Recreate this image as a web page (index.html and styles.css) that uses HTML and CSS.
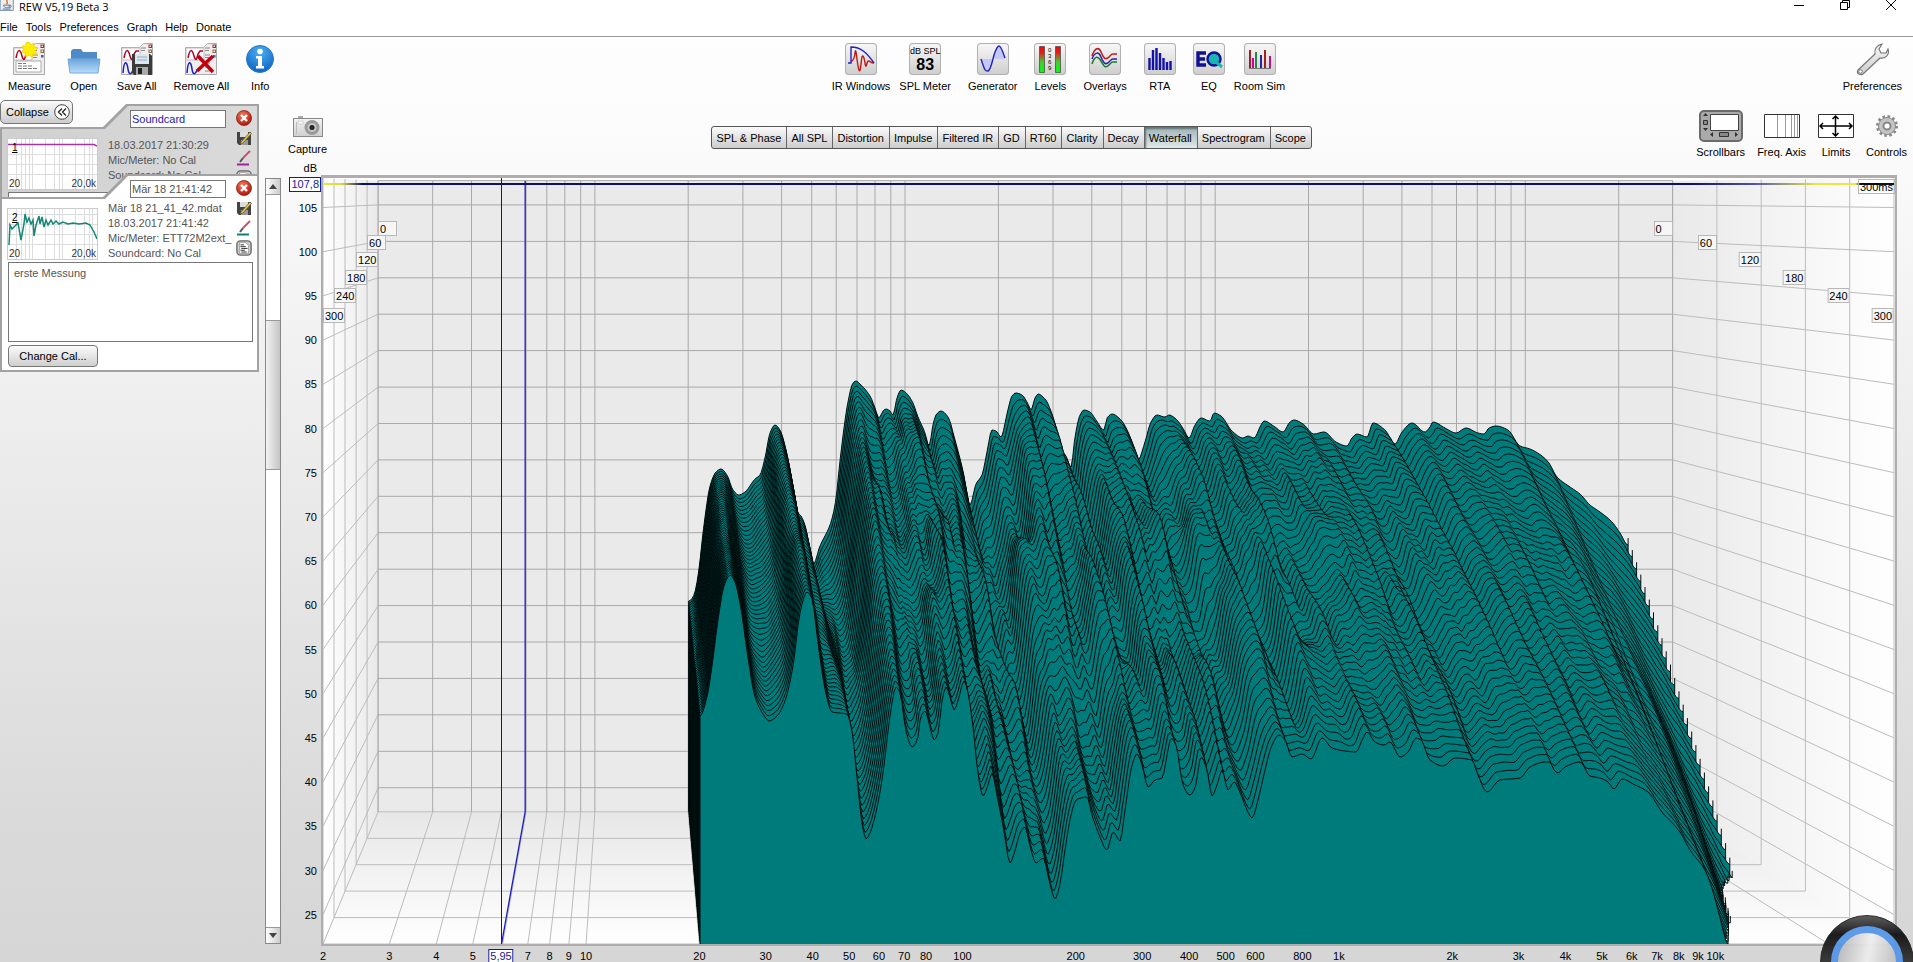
FILE: index.html
```html
<!DOCTYPE html>
<html lang="de">
<head>
    <meta charset="UTF-8">
    <meta name="viewport" content="width=device-width, initial-scale=1.0">
    <title>REW V5,19 Beta 3</title>
    <link rel="stylesheet" href="styles.css">
</head>
<body>
    <svg class="defs" aria-hidden="true">
        <defs>
            <linearGradient id="chrome" x1="0" y1="0" x2="0" y2="1"><stop offset="0" stop-color="#f4f4f4"/><stop offset="1" stop-color="#cfcfcf"/></linearGradient>
            <linearGradient id="meter" x1="0" y1="0" x2="0" y2="1"><stop offset="0" stop-color="#f00"/><stop offset=".25" stop-color="#d22"/><stop offset=".6" stop-color="#4c3"/><stop offset="1" stop-color="#0f0"/></linearGradient>
            <linearGradient id="folder" x1="0" y1="0" x2="0" y2="1"><stop offset="0" stop-color="#6aa5dd"/><stop offset="1" stop-color="#b9dcf8"/></linearGradient>
            <radialGradient id="ball" cx=".5" cy=".25" r=".8"><stop offset="0" stop-color="#4cb0f5"/><stop offset="1" stop-color="#0a60bd"/></radialGradient>
            <radialGradient id="redball" cx=".4" cy=".3" r=".8"><stop offset="0" stop-color="#f47a5c"/><stop offset="1" stop-color="#a80a00"/></radialGradient>
            <symbol id="i-sheet" viewBox="0 0 32 32">
                <path d="M.5 4.500h18l4-4h9v31H.5z" fill="#eee" stroke="#aaa"/>
                <path d="M1 5h18v12H1z" fill="#fff" stroke="#bbb"/>
                <path d="M3 15c2-10 4-9 6-2s3 2 4-2l2-3h3" fill="none" stroke="#b00020" stroke-width="1.500"/>
                <path d="M20 5h5M20 7.500h4M20 12h5M20 14.500h4" stroke="#888"/>
                <rect x="28" y="2" width="2.500" height="2.500" fill="none" stroke="#b22"/><rect x="28" y="7" width="2.500" height="2.500" fill="none" stroke="#964"/><rect x="28" y="12" width="2.500" height="2.500" fill="#36a"/>
            </symbol>
            <symbol id="i-disk" viewBox="0 0 20 22">
                <path d="M0 1h18l2 2v19H2l-2-2z" fill="#3a3a3a"/><path d="M3 1h14v10H3z" fill="#dce8ee"/><path d="M5 4h10M5 7h10" stroke="#9ab"/><path d="M4 14h12v8H4z" fill="#aaa"/><path d="M6 15h4v6H6z" fill="#222"/>
            </symbol>
            <symbol id="i-close" viewBox="0 0 16 16"><circle cx="8" cy="8" r="7.500" fill="url(#redball)" stroke="#8c1a10" stroke-width=".8"/><path d="M5 5l6 6M11 5l-6 6" stroke="#fff" stroke-width="2.400"/></symbol>
            <symbol id="i-savepen" viewBox="0 0 16 16"><path d="M1 2h14v13H3l-2-2z" fill="#444"/><path d="M4 2h8v5H4z" fill="#ddd"/><path d="M5 10h7v5H5z" fill="#999"/><path d="M5 12L14 2l1.500 1.500L7 13l-3 1z" fill="#e8c548" stroke="#553" stroke-width=".7"/></symbol>
            <symbol id="i-brush" viewBox="0 0 16 16"><path d="M14 1L7 8" stroke="#d0506a" stroke-width="2"/><path d="M7 8l-3 4" stroke="#555" stroke-width="2"/><path d="M1 14.500h12" stroke="currentColor" stroke-width="2"/></symbol>
            <symbol id="i-note" viewBox="0 0 18 18"><rect x="1" y="1" width="16" height="16" rx="4" fill="#ccc" stroke="#666" stroke-width="1.500"/><path d="M4 3h7l3 3v9H4z" fill="#fff" stroke="#777" stroke-width=".6"/><path d="M5 5.500h4M5 7.500h6M6 9.500h7M5 11.500h5M6 13.500h6" stroke="#222"/></symbol>
        </defs>
    </svg>

    <header class="titlebar">
        <svg class="java" viewBox="0 0 16 16"><rect x="-1" y="-2" width="15" height="15" fill="#eee" stroke="#68a"/><path d="M8 0c-4 3 2 3-2 6" fill="none" stroke="#e07020" stroke-width="1.500"/><path d="M3 7h7c0 4-7 4-7 0M10 7c3 0 2 3-1 3M2 11.500h9" fill="none" stroke="#446a90"/></svg>
        <span class="title">REW V5,19 Beta 3</span>
        <div class="winbtns">
            <button aria-label="Minimize"><svg viewBox="0 0 12 12"><path d="M1 5.500h10" stroke="#000"/></svg></button>
            <button aria-label="Restore"><svg viewBox="0 0 12 12"><path d="M1.500 2.500h7v7h-7zM3.500 2.500v-2h7v7h-2" fill="none" stroke="#000"/></svg></button>
            <button aria-label="Close"><svg viewBox="0 0 12 12"><path d="M1 0l10 10M11 0L1 10" stroke="#000"/></svg></button>
        </div>
    </header>

    <nav class="menubar">
        <a href="#">File</a><a href="#">Tools</a><a href="#">Preferences</a><a href="#">Graph</a><a href="#">Help</a><a href="#">Donate</a>
    </nav>

    <div class="toolbar">
        <div class="tools files">
            <button class="tool"><svg viewBox="0 0 32 32"><use href="#i-sheet" width="32" height="32"/><path d="M3 18h25v11H3z" fill="#fff" stroke="#aaa"/><path d="M5 20.500h8M5 23h14M5 25.500h20" stroke="#777" stroke-dasharray="4 1"/><path d="M16-1l2 3 3-2 0 4 4 1-3 3 2 3-4 0-1 3-3-2-3 2-1-4-3-1 2-3-2-3 4-0 0-3z" fill="#ffee00" stroke="#f4d800"/></svg>Measure</button>
            <button class="tool"><svg viewBox="0 0 32 32"><path d="M3 8l2-2h8l2 3h14v8H3z" fill="#4f8bc8"/><path d="M0 16h32l-2 14H2z" fill="url(#folder)" stroke="#72aade"/></svg>Open</button>
            <button class="tool"><svg viewBox="0 0 32 32"><use href="#i-sheet" width="32" height="32"/><path d="M2 30c1-14 4-12 5-4s4 4 5 1" fill="none" stroke="#1a1acc" stroke-width="1.500"/><use href="#i-disk" x="11" y="10" width="20" height="22"/></svg>Save All</button>
            <button class="tool"><svg viewBox="0 0 32 32"><use href="#i-sheet" width="32" height="32"/><path d="M2 30c1-14 4-12 5-4s4 4 5 1" fill="none" stroke="#1a1acc" stroke-width="1.500"/><path d="M20 20h5M20 24h4M20 28h5" stroke="#888"/><path d="M13 13l15 16M28 13L12 28" stroke="#c00010" stroke-width="3.500"/></svg>Remove All</button>
            <button class="tool info"><svg viewBox="0 0 28 28"><circle cx="14" cy="14" r="13.500" fill="url(#ball)" stroke="#2a78c8"/><circle cx="14" cy="6.500" r="2.800" fill="#fff"/><path d="M10 11h6v10h2v2.500h-8V21h2v-7.500h-2z" fill="#fff"/></svg>Info</button>
        </div>
        <div class="tools views">
            <button class="tool"><svg class="tile" viewBox="0 0 32 32"><path d="M3 20h3V4c10 0 16 6 23 16" fill="none" stroke="#22b" stroke-width="1.400"/><path d="M6 19c1-2 3 0 4-9s2 12 4 17 2-16 4-14 2 11 3 10 1-6 3-5 2 2 5 2" fill="none" stroke="#c01818" stroke-width="1.400"/></svg>IR Windows</button>
            <button class="tool"><span class="tile spl"><small>dB SPL</small><b>83</b></span>SPL Meter</button>
            <button class="tool"><svg class="tile" viewBox="0 0 32 32"><path d="M4 16c3 9 4 13 7 12s4-8 5-12zM16 16c2-6 3-12 6-13s4 6 6 13z" fill="#c3c8f4"/><path d="M4 16c3 9 4 13 7 12s5-13 6-16 3-9 5-9 4 6 6 12" fill="none" stroke="#22b" stroke-width="1.400"/></svg>Generator</button>
            <button class="tool"><svg class="tile" viewBox="0 0 32 32"><path d="M5.500 3.500h5v26h-5zM21.500 3.500h5v26h-5z" fill="url(#meter)" stroke="#444" stroke-width=".7"/><text x="14" y="9" class="tick">0</text><text x="14" y="15" class="tick">3</text><text x="14" y="21" class="tick">6</text><text x="14" y="27" class="tick">9</text></svg>Levels</button>
            <button class="tool"><svg class="tile" viewBox="0 0 32 32"><g fill="none" stroke-width="1.500"><path d="M3 13c3-9 7-9 9-4s4 9 8 5 3-3 8-3" stroke="#c01818"/><path d="M3 16c3-8 7-7 9-2s4 9 8 5 3-3 8-3" stroke="#22b"/><path d="M3 21c3-9 6-8 9-3s4 8 8 4 3-3 8-3" stroke="#197a2c"/></g></svg>Overlays</button>
            <button class="tool"><svg class="tile" viewBox="0 0 32 32"><path d="M7 27V15M10.500 27V7M14 27V5M17.500 27V10M21 27V15M24.500 27V19M28 27V18" transform="translate(-1.500 0)" stroke="#1212a8" stroke-width="2.400"/></svg>RTA</button>
            <button class="tool"><svg class="tile" viewBox="0 0 32 32"><circle cx="21" cy="16" r="6.500" fill="#19b4b4" stroke="#101090" stroke-width="2.400"/><path d="M23 19l6 5" stroke="#19b4b4" stroke-width="3"/><path d="M13 10H5v12h8M5 16h7" fill="none" stroke="#101090" stroke-width="3.400"/></svg>EQ</button>
            <button class="tool"><svg class="tile" viewBox="0 0 32 32"><g stroke-width="2"><path d="M6 25V7" stroke="#a02020"/><path d="M9 25V15" stroke="#c0a"/><path d="M12 25V9" stroke="#284"/><path d="M17 25V12" stroke="#22a"/><path d="M21 25V7" stroke="#a02020"/><path d="M26 25V13" stroke="#b18"/></g><path d="M5 25.500h22" stroke="#777"/></svg>Room Sim</button>
        </div>
        <div class="tools prefs">
            <button class="tool"><svg viewBox="0 0 32 32"><path d="M2 27L19 11c-1-5 2-9 7-10l-3 5 2 4 5 0 2-4c2 6-3 10-8 9L7 31c-3 2-7-1-5-4z" fill="url(#chrome)" stroke="#777" stroke-width="1.200"/><circle cx="4.500" cy="28.500" r="1.800" fill="#fff" stroke="#777"/></svg>Preferences</button>
        </div>
    </div>

    <div class="main">
        <aside class="sidebar">
            <button class="collapse">Collapse <svg viewBox="0 0 16 16"><circle cx="8" cy="8" r="7.300" fill="#fff" stroke="#444"/><path d="M8 4.500L4.500 8 8 11.500M12 4.500L8.500 8l3.500 3.500" fill="none" stroke="#222" stroke-width="1.300"/></svg></button>
            <div class="sidebody">
                <div class="cards">
                    <section class="card muted">
                        <div class="cardbody">
                            <input class="cardname" aria-label="Name 1" value="Soundcard">
                            <svg class="thumb" viewBox="0 0 89 50">
                                <path class="tgrid" d="M8.500 0v50M13.500 0v50M17.500 0v50M21.500 0v50M24.500 0v50M37.500 0v50M46.500 0v50M51.500 0v50M54.500 0v50M67.500 0v50M76.500 0v50M81.500 0v50M84.500 0v50M0 15.500h89M0 25.500h89M0 35.500h89"/>
                                <path d="M0 5.500h86l3 1.500" fill="none" stroke="#a436a4" stroke-width="1.500"/>
                                <text x="4" y="12" class="num">1</text><text x="1" y="48">20</text><text x="88" y="48" text-anchor="end">20,0k</text>
                            </svg>
                            <p class="meta">18.03.2017 21:30:29<br>Mic/Meter: No Cal<br>Soundcard: No Cal</p>
                            <div class="cardicons brush-violet"><svg><use href="#i-close"/></svg><svg><use href="#i-savepen"/></svg><svg><use href="#i-brush"/></svg><svg><use href="#i-note"/></svg></div>
                            <textarea class="notes" aria-label="Notes 1"></textarea>
                            <button class="change">Change Cal...</button>
                        </div>
                    </section>
                    <section class="card">
                        <div class="cardbody">
                            <input class="cardname" aria-label="Name 2" value="Mär 18 21:41:42">
                            <svg class="thumb" viewBox="0 0 89 50">
                                <path class="tgrid" d="M8.500 0v50M13.500 0v50M17.500 0v50M21.500 0v50M24.500 0v50M37.500 0v50M46.500 0v50M51.500 0v50M54.500 0v50M67.500 0v50M76.500 0v50M81.500 0v50M84.500 0v50M0 5.500h89M0 15.500h89M0 25.500h89M0 35.500h89"/>
                                <path d="M1 36l1-20 2 4 3-3 3-3 3 17 3-16 1-10 2 8 2-4 2 6 2-4 1 16 2-11 3-9 1 8 2-7 2 10 2-7 2 5 3-5 2 4 3-3 3 3 4-2 5 2 5-1 6 1 7-1 4 2 4 7 3 7" fill="none" stroke="#138878" stroke-width="1.500"/>
                                <text x="4" y="12" class="num">2</text><text x="1" y="48">20</text><text x="88" y="48" text-anchor="end">20,0k</text>
                            </svg>
                            <p class="meta">Mär 18 21_41_42.mdat<br>18.03.2017 21:41:42<br>Mic/Meter: ETT72M2ext_<br>Soundcard: No Cal</p>
                            <div class="cardicons brush-teal"><svg><use href="#i-close"/></svg><svg><use href="#i-savepen"/></svg><svg><use href="#i-brush"/></svg><svg><use href="#i-note"/></svg></div>
                            <textarea class="notes" aria-label="Notes 2">erste Messung</textarea>
                            <button class="change">Change Cal...</button>
                        </div>
                    </section>
                </div>
                <div class="scroll">
                    <button aria-label="Scroll up"><svg viewBox="0 0 8 5"><path d="M0 5l4-5 4 5z"/></svg></button>
                    <div class="track before"></div>
                    <div class="thumbbar"></div>
                    <div class="track after"></div>
                    <button aria-label="Scroll down"><svg viewBox="0 0 8 5"><path d="M0 0l4 5 4-5z"/></svg></button>
                </div>
            </div>
        </aside>

        <main class="graph">
            <div class="graphbar">
                <button class="tool capture"><svg viewBox="0 0 30 22"><path d="M5 2V0h5v2z" fill="#aaa"/><rect x=".5" y="2.500" width="29" height="18" fill="url(#chrome)" stroke="#888"/><path d="M3.500 6v12" stroke="#bbb"/><circle cx="19" cy="11.500" r="7.500" fill="#999"/><circle cx="19" cy="11.500" r="4.500" fill="#c4c4c4"/><circle cx="19" cy="11.500" r="2.500" fill="#222"/><path d="M5 5h5v3H5z" fill="#fff" stroke="#bbb" stroke-width=".6"/></svg>Capture</button>
                <div class="tabs">
                    <button>SPL &amp; Phase</button><button>All SPL</button><button>Distortion</button><button>Impulse</button><button>Filtered IR</button><button>GD</button><button>RT60</button><button>Clarity</button><button>Decay</button><button class="active">Waterfall</button><button>Spectrogram</button><button>Scope</button>
                </div>
                <div class="tools display">
                    <button class="tool"><svg class="w44" viewBox="0 0 44 32"><rect x="1" y="1" width="42" height="30" rx="4" fill="#aaa" stroke="#6a6a6a" stroke-width="2"/><path d="M11.500 4.500h28v16h-28z" fill="#fff" stroke="#444"/><path d="M4 6l2.500-3L9 6zM4 18l2.500 3L9 18zM14 22v5l-3-2.500zM36 22v5l3-2.500z" fill="#333"/><path d="M4.500 10.500h4v4h-4zM20.500 22.500h9v4h-9z" fill="#888" stroke="#333"/></svg>Scrollbars</button>
                    <button class="tool"><svg class="w36" viewBox="0 0 36 32"><path d="M.5 4.500h35v23H.500z" fill="#fff" stroke="#333"/><path d="M13.500 5v22M21.500 5v22M27.500 5v22M30.500 5v22M33.500 5v22" stroke="#999"/></svg>Freq. Axis</button>
                    <button class="tool"><svg class="w36" viewBox="0 0 36 32"><path d="M.5 4.500h35v23H.500z" fill="#fff" stroke="#333"/><path d="M2 16h32M17.500 6v20M5 13l-3 3 3 3M31 13l3 3-3 3M14.500 9l3-3 3 3M14.500 23l3 3 3-3" fill="none" stroke="#000" stroke-width="1.500"/></svg>Limits</button>
                    <button class="tool"><svg class="w22" viewBox="0 0 22 32"><circle cx="11" cy="16" r="9.500" fill="none" stroke="#888" stroke-width="3" stroke-dasharray="2.500 2.500"/><circle cx="11" cy="16" r="8.500" fill="#c4c4c4" stroke="#8a8a8a"/><circle cx="11" cy="16" r="3.500" fill="#fff" stroke="#888" stroke-width="2"/></svg>Controls</button>
                </div>
            </div>

            <div class="chart">
                <div class="yunit">dB</div>
                <div class="yaxis" id="yaxis"><span class="readout ymark">107,8</span></div>
                <div class="plot" id="plot">
                    <svg id="surface" viewBox="323 178 1572 766" preserveAspectRatio="none" role="img" aria-label="Waterfall">
                        <defs>
                            <linearGradient id="wallL"><stop offset="0" stop-color="#fff"/><stop offset="1" stop-color="#e9e9e9"/></linearGradient>
                            <linearGradient id="wallR"><stop offset="0" stop-color="#e9e9e9"/><stop offset="1" stop-color="#fff"/></linearGradient>
                            <linearGradient id="floor" x1="0" y1="0" x2="0" y2="1"><stop offset="0" stop-color="#e7e7e7"/><stop offset="1" stop-color="#fff"/></linearGradient>
                            <linearGradient id="level" gradientUnits="userSpaceOnUse" x1="323" y1="0" x2="1895" y2="0"><stop offset="0" stop-color="#e8e840"/><stop offset=".012" stop-color="#d8d840"/><stop offset=".025" stop-color="#101060"/><stop offset=".87" stop-color="#101060"/><stop offset=".91" stop-color="#5050b0"/><stop offset=".95" stop-color="#e8e840"/><stop offset=".975" stop-color="#e8e840"/><stop offset=".978" stop-color="#111"/><stop offset="1" stop-color="#111"/></linearGradient>
                        </defs>
                    </svg>
                    <span class="zlabel zend">300ms</span>
                </div>
                <div class="xaxis" id="xaxis"></div>
            </div>
        </main>
    </div>

    <div class="knob"><div class="ring"></div></div>

    <script src="waterfall.js"></script>
</body>
</html>
```
FILE: styles.css
```css
* {
    box-sizing: border-box;
}

body {
    margin: 0;
    height: 100vh;
    display: flex;
    flex-direction: column;
    overflow: hidden;
    position: relative;
    background: linear-gradient(#ffffff 0, #fbfbfb 15%, #dadada 85%, #d6d6d6);
    font-family: "Liberation Sans", Arial, sans-serif;
    font-size: 11px;
    color: #000;
}

button {
    font: inherit;
    color: inherit;
    border: 0;
    padding: 0;
    background: none;
}

.defs {
    position: absolute;
    width: 0;
    height: 0;
}

/* title and menu */
.titlebar {
    display: flex;
    align-items: center;
    height: 16px;
    padding-bottom: 4px;
    background: #fff;
}

.java {
    width: 16px;
    height: 14px;
}

.title {
    margin-left: 3px;
    font-family: "Open Sans", "Liberation Sans", sans-serif;
}

.winbtns {
    margin-left: auto;
    display: flex;
    gap: 34px;
    padding-right: 16px;
}

.winbtns svg {
    display: block;
    width: 12px;
    height: 12px;
}

.menubar {
    display: flex;
    gap: 8px;
    height: 21px;
    padding-top: 2px;
    align-items: center;
    background: #fff;
    border-bottom: 1px solid #999;
}

.menubar a {
    color: #000;
    text-decoration: none;
}

/* tool buttons */
.toolbar {
    display: flex;
    justify-content: space-between;
    padding: 6px 11px 0 8px;
    height: 60px;
    flex: none;
}

.tools {
    display: flex;
    gap: 17px;
}

.tools.display {
    gap: 12px;
}

.tool {
    display: flex;
    flex-direction: column;
    align-items: center;
    gap: 4px;
    height: 50px;
    line-height: 14px;
    white-space: nowrap;
}

.tool svg,
.tile {
    display: block;
    width: 32px;
    height: 32px;
    overflow: visible;
}

.tool.info svg {
    width: 28px;
}

.views .tool:first-child {
    margin-right: -8px;
}

.views .tool:last-child {
    margin-left: -8px;
}

.tile {
    border-radius: 4px;
    background: linear-gradient(#f8f8f8, #cdcdcd);
    box-shadow: inset 0 0 0 1px #b0b0b0;
}

.spl {
    display: flex;
    flex-direction: column;
    align-items: center;
    padding-top: 3px;
}

.spl small {
    font-size: 9px;
    line-height: 10px;
}

.spl b {
    font-size: 16px;
    line-height: 18px;
}

.tick {
    font-size: 6px;
}

/* sidebar */
.main {
    flex: 1;
    display: flex;
    min-height: 0;
}

.sidebar {
    width: 281px;
    flex: none;
    display: flex;
    flex-direction: column;
    padding: 3px 0 18px;
}

.collapse {
    display: flex;
    align-items: center;
    gap: 5px;
    width: 73px;
    height: 24px;
    padding-left: 5px;
    border: 1px solid #777;
    border-radius: 5px;
    background: linear-gradient(#fafafa, #cccccc);
    position: relative;
    z-index: 1;
}

.collapse svg {
    width: 16px;
    height: 16px;
}

.sidebody {
    display: flex;
    flex: 1;
    justify-content: space-between;
    margin-top: -20px;
    min-height: 0;
}

.cards {
    width: 259px;
}

.card {
    height: 198px;
    padding: 2px;
    background: #a2a2a2;
    clip-path: polygon(0 23px, 103px 23px, 126px 0, 100% 0, 100% 100%, 0 100%);
}

.card + .card {
    margin-top: -128px;
    position: relative;
}

.cardbody {
    height: 100%;
    padding: 4px 5px 3px 6px;
    background: #fff;
    clip-path: polygon(0 23px, 103px 23px, 126px 0, 100% 0, 100% 100%, 0 100%);
    display: grid;
    grid-template-columns: 90px 118px 18px;
    grid-template-rows: 19px 57px 80px 22px;
    column-gap: 10px;
    row-gap: 3px;
}

.muted .cardbody {
    background: linear-gradient(90deg, #d0d0d0, #dadada);
}

.cardname {
    grid-column: 2;
    justify-self: end;
    width: 96px;
    height: 18px;
    border: 1px solid #777;
    padding: 0 1px;
    background: #fff;
    font: inherit;
    color: #555;
}

.muted .cardname {
    color: #2222aa;
}

.thumb {
    grid-row: 2;
    grid-column: 1;
    align-self: end;
    width: 89px;
    height: 50px;
    background: #fff;
    outline: 1px solid #ccc;
    font-size: 10px;
    fill: #333;
}

.tgrid {
    stroke: #ddd;
}

.thumb .num {
    text-decoration: underline;
    fill: #000;
}

.meta {
    grid-row: 2;
    grid-column: 2;
    align-self: center;
    margin: 0;
    line-height: 15px;
    color: #555;
    white-space: nowrap;
}

.cardicons {
    grid-row: 1 / 3;
    grid-column: 3;
    display: flex;
    flex-direction: column;
    align-items: center;
    gap: 4px;
    margin-left: -2px;
}

.cardicons svg {
    width: 16px;
    height: 16px;
}

.brush-violet {
    color: #a020a0;
}

.brush-teal {
    color: #108070;
}

.notes {
    grid-column: 1 / 4;
    width: 245px;
    height: 80px;
    border: 1px solid #777;
    padding: 4px 5px;
    resize: none;
    font: inherit;
    color: #555;
    background: #fff;
}

.change {
    width: 90px;
    height: 22px;
    border: 1px solid #777;
    border-radius: 4px;
    background: linear-gradient(#fcfcfc, #cfcfcf);
}

.scroll {
    width: 16px;
    margin-top: 74px;
    display: flex;
    flex-direction: column;
    border: 1px solid #888;
}

.scroll button {
    height: 15px;
    background: linear-gradient(90deg, #fff, #ccc);
}

.scroll button svg {
    display: block;
    width: 8px;
    height: 5px;
    margin: auto;
    fill: #444;
}

.track {
    background: #fff;
    border: solid #999;
    border-width: 1px 0;
}

.track.before {
    flex: 126;
}

.thumbbar {
    flex: 150;
    background: linear-gradient(90deg, #f2f2f2, #c4c4c4);
}

.track.after {
    flex: 462;
}

/* graph */
.graph {
    flex: 1;
    display: flex;
    flex-direction: column;
    min-width: 0;
}

.graphbar {
    display: flex;
    justify-content: space-between;
    height: 65px;
    flex: none;
    padding: 13px 6px 0 7px;
}

.capture {
    margin-top: 6px;
    height: 44px;
}

.capture svg {
    width: 30px;
    height: 22px;
}

.tabs {
    display: flex;
    margin-top: 16px;
    height: 23px;
    border: 1px solid #555;
    border-radius: 3px;
    overflow: hidden;
    background: linear-gradient(#fbfbfb, #cccccc);
}

.tabs button {
    padding: 0 5px 0 4px;
    border-left: 1px solid #666;
    white-space: nowrap;
}

.tabs button:first-child {
    border-left: 0;
}

.tabs .active {
    background: linear-gradient(#9fb2b4, #dfeaea);
    box-shadow: inset 1px 2px 2px #5f7476;
}

.display .tool {
    gap: 3px;
}

.tool .w44 {
    width: 44px;
}

.tool .w36 {
    width: 36px;
}

.tool .w22 {
    width: 22px;
}

.chart {
    flex: 1;
    min-height: 0;
    display: grid;
    grid-template-columns: 40px 1fr 16px;
    grid-template-rows: 13px 1fr 16px;
}

.yunit {
    grid-column: 1;
    grid-row: 1;
    text-align: right;
    padding-right: 4px;
    line-height: 13px;
}

.yaxis {
    grid-column: 1;
    grid-row: 2;
    position: relative;
    margin: 3px 0 2px;
}

.yaxis .tickmark {
    position: absolute;
    right: 4px;
    line-height: 14px;
    margin-top: -7px;
}

.plot {
    grid-column: 2;
    grid-row: 2;
    position: relative;
    border: 2px solid #b0aeac;
    border-top-width: 3px;
    background: #fff;
    min-height: 0;
}

#surface {
    display: block;
    width: 100%;
    height: 100%;
}

.xaxis {
    grid-column: 2;
    grid-row: 3;
    position: relative;
    margin: 0 2px;
}

.xaxis .tickmark {
    position: absolute;
    top: 3px;
    line-height: 14px;
    transform: translateX(-50%);
}

.readout {
    border: 1px solid #1a1a90;
    background: #fff;
    color: #1a1a90;
    position: absolute;
    line-height: 13px;
    padding: 0 1px;
}

.ymark {
    right: 0;
    top: -1px;
}

.xaxis .xmark {
    top: 3px;
    transform: translateX(-50%);
}

.zlabel {
    position: absolute;
    min-width: 19px;
    height: 15px;
    margin-top: -8px;
    padding: 0 1px;
    border: 1px solid #b8b8b8;
    background: #f6f6f6;
    line-height: 14px;
}

.zlabel.right {
    transform: translateX(-100%);
}

.zend {
    right: 0;
    top: 9px;
    background: transparent;
}

.gridback {
    fill: none;
    stroke: #a9a9a9;
}

.gridside {
    fill: none;
    stroke: #bcbcbc;
}

.slice {
    fill: #007b7b;
}

.edge {
    fill: none;
    stroke: #000c0c;
}

/* volume knob over the lower right corner */
.knob {
    position: absolute;
    right: -1px;
    bottom: -47px;
    width: 94px;
    height: 94px;
    border-radius: 50%;
    background: linear-gradient(#555, #111 20%, #333 50%);
    padding: 10px;
    opacity: .95;
    border: 1px solid #222;
}

.ring {
    height: 100%;
    border-radius: 50%;
    border: 7px solid #5596e8;
    background: linear-gradient(100deg, #b4b4b4, #eeeeee 50%, #b8b8b8);
}
```
FILE: waterfall.js
```js
// One-point perspective box: front face, vanishing point and shrink factor of the back face
const FRONT = { left: 323, right: 1894, top: 178, bottom: 944 };
const VANISH = { x: 636, y: 193 };
const SHRINK = 0.176;
const DECADE = 376.4;
const DB_PX = 8.84;
const SLICES = 51;

const svg = document.getElementById('surface');
const plot = document.getElementById('plot');

// depth: 0 = front (300 ms), 1 = back (0 ms)
function project(x, y, depth) {
    const s = 1 - SHRINK * depth;
    return [VANISH.x + (x - VANISH.x) * s, VANISH.y + (y - VANISH.y) * s];
}

function unproject(p) {
    const s = 1 - SHRINK;
    return [VANISH.x + (p[0] - VANISH.x) / s, VANISH.y + (p[1] - VANISH.y) / s];
}

const freqX = f => FRONT.left + Math.log10(f / 2) * DECADE;
const dbY = db => 207.5 + (105 - db) * DB_PX;

function add(tag, attrs) {
    const el = document.createElementNS('http://www.w3.org/2000/svg', tag);
    for (const k in attrs) el.setAttribute(k, attrs[k]);
    svg.appendChild(el);
    return el;
}

function line(a, b) {
    return `M${a[0].toFixed(1)} ${a[1].toFixed(1)}L${b[0].toFixed(1)} ${b[1].toFixed(1)}`;
}

function drawBox() {
    const F = FRONT;
    const tl = project(F.left, F.top, 1), tr = project(F.right, F.top, 1);
    const bl = project(F.left, F.bottom, 1), br = project(F.right, F.bottom, 1);
    add('path', { d: `M${F.left} ${F.top}L${tl}L${bl}L${F.left} ${F.bottom}z`, fill: 'url(#wallL)' });
    add('path', { d: `M${F.right} ${F.top}L${tr}L${br}L${F.right} ${F.bottom}z`, fill: 'url(#wallR)' });
    add('path', { d: `M${bl}L${br}L${F.right} ${F.bottom}L${F.left} ${F.bottom}z`, fill: 'url(#floor)' });
    add('path', { d: `M${tl}L${tr}L${br}L${bl}z`, fill: '#eaeaea' });

    let back = '', side = '';
    for (let db = 25; db <= 105; db += 5) {
        const y = dbY(db);
        const l = project(F.left, y, 1), r = project(F.right, y, 1);
        back += line(l, r);
        side += line([F.left, y], l) + line(r, [F.right, y]);
    }
    for (let dec = 1; dec <= 10000; dec *= 10) {
        for (let m = 1; m < 10; m++) {
            const f = dec * m;
            if (f < 2 || f > 29000) continue;
            const x = freqX(f);
            back += line(project(x, F.top, 1), project(x, F.bottom, 1));
            side += line(project(x, F.bottom, 1), [x, F.bottom]);
        }
    }
    for (let i = 0; i <= 5; i++) {
        const d = i / 5;
        const a = project(F.left, F.bottom, d), b = project(F.right, F.bottom, d);
        side += line(a, b) + line([a[0], project(0, F.top, d)[1]], a) + line([b[0], project(0, F.top, d)[1]], b);
    }
    back += line(tl, tr) + line(tr, br);
    add('path', { d: side, class: 'gridside' });
    add('path', { d: back, class: 'gridback' });
}

// first slice (0 ms)
const backCurve = [
    689,601, 694,595, 698,576, 704,525, 710,486, 716,472, 721,469, 727,475, 733,490, 739,495, 745,492, 755,479,
    760,475, 765,458, 770,433, 775,425, 780,430, 786,450, 793,486, 798,513, 801,516, 805,525, 813,565, 820,546,
    830,525, 835,505, 841,452, 848,402, 853,383, 856,381, 860,384, 870,396, 875,408, 879,418, 883,411, 886,409,
    890,411, 893,415, 897,398, 901,390, 905,392, 912,401, 918,417, 925,433, 929,446, 933,425, 936,415, 941,411,
    948,417, 955,440, 963,471, 970,505, 976,484, 982,475, 987,452, 992,430, 996,431, 1001,437, 1007,414, 1012,396,
    1016,393, 1022,395, 1028,404, 1031,410, 1035,398, 1038,394, 1045,399, 1053,417, 1060,448, 1066,456, 1071,467,
    1075,437, 1080,415, 1084,410, 1090,412, 1096,420, 1104,430, 1107,418, 1112,414, 1121,420, 1128,432, 1135,452,
    1138,460, 1145,442, 1151,422, 1157,415, 1165,417, 1169,415, 1176,419, 1184,430, 1189,438, 1195,425, 1201,418,
    1210,421, 1214,413, 1221,416, 1232,431, 1243,438, 1248,436, 1254,438, 1261,425, 1264,421, 1275,427, 1283,432,
    1290,422, 1294,420, 1303,424, 1314,434, 1324,432, 1336,442, 1347,446, 1352,438, 1357,434, 1367,437, 1373,423,
    1385,430, 1395,444, 1402,432, 1412,423, 1425,432, 1430,427, 1433,422, 1445,428, 1456,433, 1466,428, 1478,433,
    1484,434, 1489,428, 1496,426, 1508,430, 1520,446, 1530,449, 1542,456, 1549,463, 1557,477, 1570,487, 1580,494,
    1590,505, 1600,512, 1612,522, 1620,533, 1628,545
];

// last slice (300 ms)
const frontCurve = [
    700,716, 707,697, 712,666, 718,620, 724,586, 730,575, 735,582, 741,609, 748,658, 755,697, 763,714, 769,721,
    777,716, 785,701, 793,666, 800,613, 807,592, 812,599, 818,643, 825,689, 832,712, 847,714, 852,731, 857,777,
    862,823, 866,839, 870,833, 876,812, 883,773, 890,716, 896,687, 900,693, 906,731, 912,747, 917,741, 921,716,
    925,711, 930,727, 934,740, 938,733, 942,701, 946,687, 950,697, 954,710, 958,701, 964,681, 968,693, 973,727,
    978,773, 983,796, 988,785, 992,773, 997,796, 1004,831, 1010,863, 1014,854, 1020,833, 1025,827, 1030,846,
    1036,863, 1043,858, 1050,884, 1055,899, 1060,884, 1065,850, 1071,815, 1076,800, 1081,798, 1087,797, 1092,815,
    1100,837, 1107,850, 1113,832, 1120,841, 1125,810, 1132,765, 1137,754, 1142,765, 1148,787, 1155,780, 1162,778,
    1168,750, 1171,738, 1176,745, 1183,785, 1190,795, 1195,788, 1201,757, 1207,770, 1212,796, 1217,785, 1222,770,
    1228,790, 1234,782, 1241,795, 1247,810, 1252,818, 1258,800, 1265,770, 1272,745, 1279,735, 1285,740, 1292,757,
    1302,754, 1311,759, 1322,738, 1332,748, 1345,751, 1356,752, 1363,738, 1367,732, 1375,742, 1384,745, 1390,742,
    1400,757, 1408,752, 1416,738, 1421,740, 1430,760, 1443,766, 1455,758, 1472,760, 1478,775, 1487,792, 1500,780,
    1520,778, 1530,767, 1545,762, 1550,762, 1554,770, 1558,773, 1565,767, 1580,762, 1590,776, 1600,778, 1608,782,
    1614,789, 1622,779, 1635,785, 1648,792, 1662,812, 1680,832, 1690,850, 1705,870, 1711,885, 1718,910, 1727,944,
    1760,1020, 1840,1268
];

function toPoints(flat) {
    const pts = [];
    for (let i = 0; i < flat.length; i += 2) pts.push([flat[i], flat[i + 1]]);
    return pts;
}

// cubic Hermite through the knots, flat at local peaks and dips
function curve(pts) {
    const m = pts.map((p, i) => {
        if (i === 0 || i === pts.length - 1) return 0;
        const a = (p[1] - pts[i - 1][1]) / (p[0] - pts[i - 1][0]);
        const b = (pts[i + 1][1] - p[1]) / (pts[i + 1][0] - p[0]);
        return a * b <= 0 ? 0 : 2 * a * b / (a + b);
    });
    return x => {
        let i = 0;
        while (i < pts.length - 2 && pts[i + 1][0] < x) i++;
        const [x0, y0] = pts[i], [x1, y1] = pts[i + 1];
        const h = x1 - x0, t = Math.min(1, Math.max(0, (x - x0) / h));
        const t2 = t * t, t3 = t2 * t;
        return y0 * (2 * t3 - 3 * t2 + 1) + m[i] * h * (t3 - 2 * t2 + t) + y1 * (3 * t2 - 2 * t3) + m[i + 1] * h * (t3 - t2);
    };
}

function hash(i, j) {
    const v = Math.sin(i * 127.1 + j * 311.7) * 43758.5453;
    return (v - Math.floor(v)) * 2 - 1;
}

function noise(x, y) {
    const i = Math.floor(x), j = Math.floor(y);
    let u = x - i, v = y - j;
    u = u * u * (3 - 2 * u);
    v = v * v * (3 - 2 * v);
    return (hash(i, j) * (1 - u) + hash(i + 1, j) * u) * (1 - v) + (hash(i, j + 1) * (1 - u) + hash(i + 1, j + 1) * u) * v;
}

const rippleSize = curve([[700, 3], [850, 6], [900, 20], [1080, 34], [1280, 30], [1450, 17], [1600, 11], [1840, 3]]);

function drawSurface() {
    const first = curve(toPoints(backCurve).map(unproject));
    const last = curve(toPoints(frontCurve));
    for (let k = 0; k < SLICES; k++) {
        const t = k / (SLICES - 1);
        const depth = 1 - t;
        const env = Math.sin(Math.PI * t);
        const pts = [];
        for (let x = 700; x <= 1840; x += 2) {
            const ripple = noise(x / 13, t * 5) + 0.5 * noise(x / 7 + 40, t * 8);
            const y = first(x) * (1 - t) + last(x) * t + ripple * rippleSize(x) * env;
            if (y >= FRONT.bottom && x > 1700) {
                pts.push(project(x, FRONT.bottom, depth));
                break;
            }
            pts.push(project(x, Math.min(y, FRONT.bottom), depth));
        }
        const path = pts.map(p => p[0].toFixed(1) + ' ' + p[1].toFixed(1)).join('L');
        const start = project(700, FRONT.bottom, depth);
        const tip = pts[pts.length - 1];
        const outline = `M${start[0].toFixed(1)} ${start[1].toFixed(1)}L${path}L${tip[0].toFixed(1)} ${start[1].toFixed(1)}`;
        add('path', { d: outline, class: 'slice' });
        // short spike where the slice reaches the upper frequency limit
        add('path', { d: outline + line(tip, [tip[0], tip[1] - 7]), class: 'edge' });
    }
}

function drawCursor() {
    const x = 501.5;
    const foot = project(x, FRONT.bottom, 1);
    add('path', { d: `M${x} 178V944`, stroke: '#222', fill: 'none' });
    add('path', { d: `M${foot[0]} 181V${foot[1]}L${x} 944`, stroke: '#1c1cc0', 'stroke-width': 1.3, fill: 'none' });
    add('rect', { x: 323, y: 183, width: 1572, height: 2, fill: 'url(#level)' });
}

function label(parent, text, cls, pos) {
    const el = document.createElement('span');
    el.textContent = text;
    el.className = cls;
    Object.assign(el.style, pos);
    parent.appendChild(el);
}

const pctX = x => (x - 323) / 1572 * 100 + '%';
const pctY = y => (y - 178) / 766 * 100 + '%';

function drawLabels() {
    const xaxis = document.getElementById('xaxis');
    const yaxis = document.getElementById('yaxis');
    for (let db = 25; db <= 105; db += 5) {
        label(yaxis, db, 'tickmark', { top: pctY(dbY(db)) });
    }
    const freqs = [2, 3, 4, 5, 7, 8, 9, 10, 20, 30, 40, 50, 60, 70, 80, 100, 200, 300, 400, 500, 600, 800,
        1000, 2000, 3000, 4000, 5000, 6000, 7000, 8000, 9000, 10000];
    freqs.forEach(f => label(xaxis, f < 1000 ? f : f / 1000 + 'k', 'tickmark', { left: pctX(freqX(f)) }));
    label(xaxis, '5,95', 'readout xmark', { left: pctX(501) });

    [316, 296, 278, 260, 243, 229].forEach((y, i) => {
        const ms = 300 - i * 60;
        label(plot, ms, 'zlabel', { left: pctX(project(FRONT.left, 0, i / 5)[0]), top: pctY(y) });
        label(plot, ms, 'zlabel right', { left: pctX(project(FRONT.right, 0, i / 5)[0]), top: pctY(y) });
    });
}

drawBox();
drawSurface();
drawCursor();
drawLabels();
```
